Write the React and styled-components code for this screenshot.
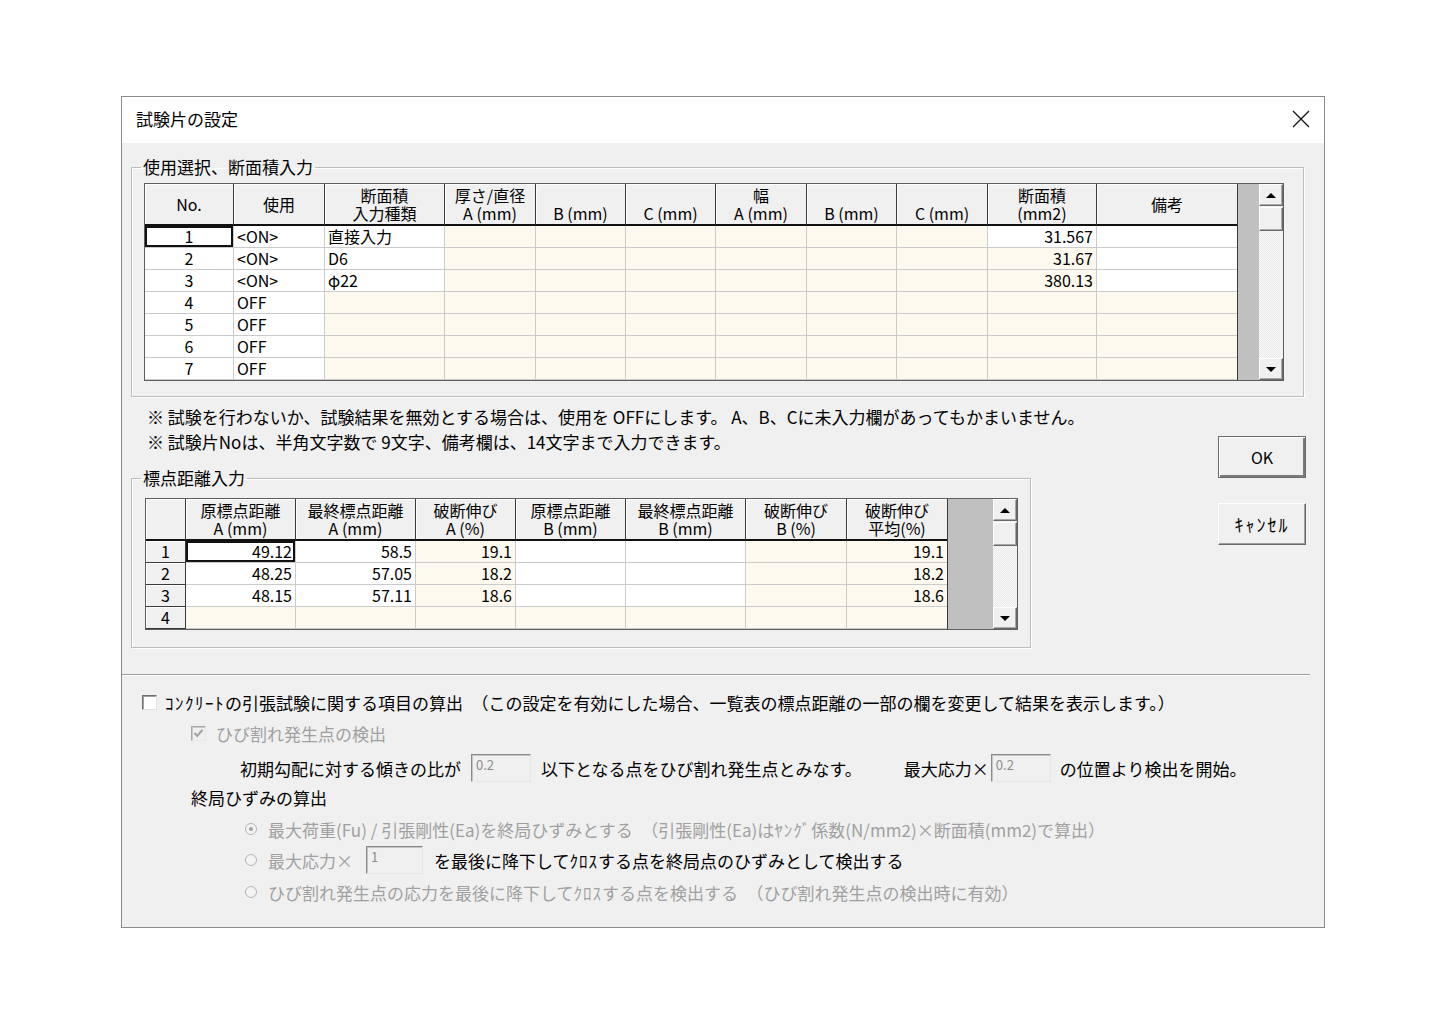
import React from 'react';
import styled, { createGlobalStyle } from 'styled-components';

const GlobalStyle = createGlobalStyle`
  body {
    margin: 0;
    background: #fff;
    font-family: "Noto Sans CJK JP", "Noto Sans", sans-serif;
    color: #000;
  }
`;

const Page = styled.div`
  padding: 96px 0 0 121px;
`;

const Dialog = styled.div`
  width: 1204px;
  height: 832px;
  box-sizing: border-box;
  border: 1px solid #8a8a8a;
  background: #f0f0f0;
  display: flex;
  flex-direction: column;
`;

const TitleBar = styled.div`
  height: 46px;
  background: #fff;
  display: flex;
  align-items: center;
  justify-content: space-between;
  padding: 0 14px 3px 14px;
  box-sizing: border-box;
  font-size: 17px;
  flex-shrink: 0;
`;

const CloseIcon = () => (
  <svg width="18" height="18" viewBox="0 0 18 18">
    <path d="M1 1 L17 17 M17 1 L1 17" stroke="#111" strokeWidth="1.3" fill="none" />
  </svg>
);

const Body = styled.div`
  padding: 14px 20px 0 9px;
`;

const Group = styled.fieldset`
  margin: 0;
  min-width: 0;
  width: ${(p) => p.$width};
  box-sizing: border-box;
  border: 1px solid #bcbcbc;
  box-shadow: inset 1px 1px #fff, 1px 1px #fff;
  padding: ${(p) => p.$pad};
`;

const Legend = styled.legend`
  font-size: 17px;
  line-height: 20px;
  padding: 0 2px;
  margin-left: ${(p) => p.$ml || '-3px'};
`;

const GridFrame = styled.div`
  display: flex;
  border: 1px solid #5e5e5e;
  width: fit-content;
  background: #fff;
`;

const Sheet = styled.div`
  display: grid;
  grid-template-columns: ${(p) => p.$cols};
  grid-template-rows: 42px;
  grid-auto-rows: 22px;
`;

const HeadCell = styled.div`
  background: #f0f0f0;
  box-shadow: inset 1px 1px #fff;
  border-right: ${(p) => (p.$last ? 'none' : '1px solid #3a3a3a')};
  border-bottom: 2px solid #111;
  display: flex;
  flex-direction: column;
  align-items: center;
  justify-content: center;
  font-size: 16px;
  line-height: 18px;
  white-space: nowrap;
`;

const Cell = styled.div`
  background: ${(p) => (p.$cream ? '#fdf9ee' : '#fff')};
  border-right: ${(p) => (p.$last ? 'none' : '1px solid #cbcbcb')};
  border-bottom: 1px solid #cbcbcb;
  font-size: 16px;
  line-height: 21px;
  padding: 0 3px;
  text-align: ${(p) => p.$align};
  white-space: nowrap;
  box-shadow: ${(p) => (p.$sel ? 'inset 0 0 0 2px #111' : 'none')};
`;

const RowHead = styled.div`
  background: #f0f0f0;
  box-shadow: inset 1px 1px #fff;
  border-right: 1px solid #3a3a3a;
  border-bottom: 1px solid #3a3a3a;
  text-align: center;
  font-size: 16px;
  line-height: 21px;
`;

const GrayFill = styled.div`
  width: ${(p) => p.$w}px;
  background: #c0c0c0;
  border-left: 1px solid #3a3a3a;
`;

const ScrollBar = styled.div`
  width: 24px;
  display: flex;
  flex-direction: column;
  background-color: #f7f7f7;
  background-image: repeating-conic-gradient(#e8e8e8 0 25%, #fafafa 0 50%);
  background-size: 2px 2px;
`;

const ScrollBtn = styled.div`
  height: ${(p) => p.$h || 22}px;
  box-sizing: border-box;
  background: #f0f0f0;
  border: 1px solid;
  border-color: #fff #6a6a6a #6a6a6a #fff;
  box-shadow: inset -1px -1px #a8a8a8;
  display: flex;
  align-items: center;
  justify-content: center;
  margin-bottom: ${(p) => p.$mb || 0}px;
`;

const Spacer = styled.div`
  flex: 1;
`;

const Arrow = styled.span`
  width: 0;
  height: 0;
  border-left: 5px solid transparent;
  border-right: 5px solid transparent;
  ${(p) => (p.$down ? 'border-top: 5px solid #000;' : 'border-bottom: 5px solid #000;')}
`;

const Scroller = () => (
  <ScrollBar>
    <ScrollBtn $mb={1}>
      <Arrow />
    </ScrollBtn>
    <ScrollBtn $h={24} />
    <Spacer />
    <ScrollBtn>
      <Arrow $down />
    </ScrollBtn>
  </ScrollBar>
);

const Notes = styled.div`
  margin-top: 7px;
  padding-left: 16px;
  font-size: 17px;
  line-height: 25px;
`;

const LowerRow = styled.div`
  display: flex;
  justify-content: space-between;
`;

const LeftCol = styled.div`
  display: flex;
  flex-direction: column;
`;

const ButtonCol = styled.div`
  display: flex;
  flex-direction: column;
  gap: 25px;
  padding-top: 39px;
  margin-right: -2px;
`;

const Button = styled.div`
  width: 88px;
  height: 42px;
  box-sizing: border-box;
  background: #f0f0f0;
  border: 1px solid;
  border-color: ${(p) => (p.$default ? '#6a6a6a' : '#fff #6a6a6a #6a6a6a #fff')};
  box-shadow: ${(p) =>
    p.$default ? 'inset 1px 1px #fff, inset -2px -2px #7a7a7a' : 'inset -1px -1px #a0a0a0'};
  display: flex;
  align-items: center;
  justify-content: center;
  font-size: 16px;
`;

const HalfKana = styled.span`
  font-size: ${(p) => p.$size || 17}px;
  letter-spacing: ${(p) => p.$ls || 1}px;
`;

const Separator = styled.div`
  margin: 26px -6px 0 -9px;
  border-top: 1px solid #a0a0a0;
  border-bottom: 1px solid #fff;
`;

const OptRow = styled.div`
  height: 28px;
  margin-top: ${(p) => p.$mt}px;
  padding-left: ${(p) => p.$indent}px;
  display: flex;
  align-items: center;
  font-size: 17px;
  white-space: nowrap;
`;

const Label = styled.span`
  color: ${(p) => (p.$dim ? '#a0a0a0' : '#000')};
  margin-left: ${(p) => p.$ml || 0}px;
`;

const CheckBox = styled.span`
  width: 15px;
  height: 15px;
  box-sizing: border-box;
  border: 1px solid;
  border-color: ${(p) => (p.$dim ? '#a8a8a8 #e8e8e8 #e8e8e8 #a8a8a8' : '#6e6e6e #e3e3e3 #e3e3e3 #6e6e6e')};
  box-shadow: inset 1px 1px ${(p) => (p.$dim ? '#c8c8c8' : '#a0a0a0')};
  background: ${(p) => (p.$dim ? '#f0f0f0' : '#fff')};
  display: inline-flex;
  align-items: center;
  justify-content: center;
  margin-right: ${(p) => p.$mr}px;
  flex-shrink: 0;
`;

const Radio = styled.span`
  width: 12px;
  height: 12px;
  box-sizing: border-box;
  border-radius: 50%;
  border: 1px solid #b4b4b4;
  background: #f4f4f4;
  display: inline-flex;
  align-items: center;
  justify-content: center;
  margin-right: 11px;
  flex-shrink: 0;
  &::after {
    content: '';
    width: 4px;
    height: 4px;
    border-radius: 50%;
    background: ${(p) => (p.$on ? '#a0a0a0' : 'transparent')};
  }
`;

const Field = styled.span`
  width: ${(p) => p.$w}px;
  height: 28px;
  box-sizing: border-box;
  border: 1px solid;
  border-color: #8a8a8a #e6e6e6 #e6e6e6 #8a8a8a;
  box-shadow: inset 1px 1px #c4c4c4;
  background: #f0f0f0;
  color: #8c8c8c;
  font-size: 13px;
  line-height: 1;
  padding: 3px 4px;
  margin: 0 ${(p) => p.$mr}px 0 ${(p) => p.$ml}px;
  flex-shrink: 0;
`;

const g1Cols = [89, 91, 120, 91, 90, 90, 91, 90, 91, 109, 140];
const g1Heads = [
  ['No.'],
  ['使用'],
  ['断面積', '入力種類'],
  ['厚さ/直径', 'A (mm)'],
  ['\u00a0', 'B (mm)'],
  ['\u00a0', 'C (mm)'],
  ['幅', 'A (mm)'],
  ['\u00a0', 'B (mm)'],
  ['\u00a0', 'C (mm)'],
  ['断面積', '(mm2)'],
  ['備考'],
];
const g1Align = ['center', 'left', 'left', 'right', 'right', 'right', 'right', 'right', 'right', 'right', 'left'];
const g1Rows = [
  ['1', '<ON>', '直接入力', '31.567'],
  ['2', '<ON>', 'D6', '31.67'],
  ['3', '<ON>', 'φ22', '380.13'],
  ['4', 'OFF', '', ''],
  ['5', 'OFF', '', ''],
  ['6', 'OFF', '', ''],
  ['7', 'OFF', '', ''],
];
const g1Cream = (r, c) => {
  if (c <= 1) return false;
  if (c >= 3 && c <= 8) return true;
  if (c === 9) return r >= 1;
  return r >= 3;
};

const g2Cols = [40, 110, 120, 100, 110, 120, 101, 100];
const g2Heads = [
  ['原標点距離', 'A (mm)'],
  ['最終標点距離', 'A (mm)'],
  ['破断伸び', 'A (%)'],
  ['原標点距離', 'B (mm)'],
  ['最終標点距離', 'B (mm)'],
  ['破断伸び', 'B (%)'],
  ['破断伸び', '平均(%)'],
];
const g2Rows = [
  ['49.12', '58.5', '19.1', '', '', '', '19.1'],
  ['48.25', '57.05', '18.2', '', '', '', '18.2'],
  ['48.15', '57.11', '18.6', '', '', '', '18.6'],
  ['', '', '', '', '', '', ''],
];
const g2Cream = (r, c) => r === 3 || c === 2 || c === 5 || c === 6;

const Head = ({ lines, last }) => (
  <HeadCell $last={last}>
    {lines.map((l, i) => (
      <span key={i}>{l}</span>
    ))}
  </HeadCell>
);

const MainGrid = () => (
  <GridFrame>
    <Sheet $cols={g1Cols.map((w) => `${w}px`).join(' ')}>
      {g1Heads.map((h, i) => (
        <Head key={i} lines={h} last={i === g1Heads.length - 1} />
      ))}
      {g1Rows.map((row, r) => {
        const cells = [row[0], row[1], row[2], '', '', '', '', '', '', row[3], ''];
        return cells.map((v, c) => (
          <Cell
            key={`${r}-${c}`}
            $align={g1Align[c]}
            $cream={g1Cream(r, c)}
            $last={c === cells.length - 1}
            $sel={r === 0 && c === 0}
          >
            {v}
          </Cell>
        ));
      })}
    </Sheet>
    <GrayFill $w={21} />
    <Scroller />
  </GridFrame>
);

const GaugeGrid = () => (
  <GridFrame>
    <Sheet $cols={g2Cols.map((w) => `${w}px`).join(' ')}>
      <HeadCell />
      {g2Heads.map((h, i) => (
        <Head key={i} lines={h} last={i === g2Heads.length - 1} />
      ))}
      {g2Rows.map((row, r) => [
        <RowHead key={`h${r}`}>{r + 1}</RowHead>,
        ...row.map((v, c) => (
          <Cell
            key={`${r}-${c}`}
            $align="right"
            $cream={g2Cream(r, c)}
            $last={c === row.length - 1}
            $sel={r === 0 && c === 0}
          >
            {v}
          </Cell>
        )),
      ])}
    </Sheet>
    <GrayFill $w={45} />
    <Scroller />
  </GridFrame>
);

const Check = () => (
  <svg width="11" height="11" viewBox="0 0 11 11">
    <path d="M1.5 5 L4.2 8 L9.5 1.8" stroke="#a0a0a0" strokeWidth="2" fill="none" />
  </svg>
);

export default function App() {
  return (
    <>
      <GlobalStyle />
      <Page>
        <Dialog>
          <TitleBar>
            <span>試験片の設定</span>
            <CloseIcon />
          </TitleBar>
          <Body>
            <Group $width="1173px" $pad="6px 19px 15px 12px">
              <Legend>使用選択、断面積入力</Legend>
              <MainGrid />
            </Group>
            <LowerRow>
              <LeftCol>
                <Notes>
                  <div>※ 試験を行わないか、試験結果を無効とする場合は、使用を OFFにします。 A、B、Cに未入力欄があってもかまいません。</div>
                  <div>※ 試験片Noは、半角文字数で 9文字、備考欄は、14文字まで入力できます。</div>
                </Notes>
                <Group $width="900px" $pad="10px 13px 17px 13px" style={{ marginTop: 14 }}>
                  <Legend $ml="-4px">標点距離入力</Legend>
                  <GaugeGrid />
                </Group>
              </LeftCol>
              <ButtonCol>
                <Button $default>OK</Button>
                <Button>
                  <HalfKana $size={18} $ls={2}>ｷｬﾝｾﾙ</HalfKana>
                </Button>
              </ButtonCol>
            </LowerRow>
            <Separator />
            <OptRow $mt={12} $indent={11}>
              <CheckBox $mr={8} />
              <Label>
                <HalfKana $ls={1.5}>ｺﾝｸﾘｰﾄ</HalfKana>の引張試験に関する項目の算出　（この設定を有効にした場合、一覧表の標点距離の一部の欄を変更して結果を表示します。）
              </Label>
            </OptRow>
            <OptRow $mt={3} $indent={60}>
              <CheckBox $mr={10} $dim>
                <Check />
              </CheckBox>
              <Label $dim>ひび割れ発生点の検出</Label>
            </OptRow>
            <OptRow $mt={7} $indent={109}>
              <Label>初期勾配に対する傾きの比が</Label>
              <Field $w={60} $ml={10} $mr={10}>0.2</Field>
              <Label>以下となる点をひび割れ発生点とみなす。</Label>
              <Label $ml={42}>最大応力×</Label>
              <Field $w={60} $ml={2} $mr={9}>0.2</Field>
              <Label>の位置より検出を開始。</Label>
            </OptRow>
            <OptRow $mt={1} $indent={60}>
              <Label>終局ひずみの算出</Label>
            </OptRow>
            <OptRow $mt={4} $indent={114}>
              <Radio $on />
              <Label $dim>
                最大荷重(Fu) / 引張剛性(Ea)を終局ひずみとする　（引張剛性(Ea)は<HalfKana>ﾔﾝｸﾞ</HalfKana>係数(N/mm2)×断面積(mm2)で算出）
              </Label>
            </OptRow>
            <OptRow $mt={3} $indent={114}>
              <Radio />
              <Label $dim>最大応力×</Label>
              <Field $w={57} $ml={13} $mr={11}>1</Field>
              <Label>
                を最後に降下して<HalfKana>ｸﾛｽ</HalfKana>する点を終局点のひずみとして検出する
              </Label>
            </OptRow>
            <OptRow $mt={4} $indent={114}>
              <Radio />
              <Label $dim>
                ひび割れ発生点の応力を最後に降下して<HalfKana>ｸﾛｽ</HalfKana>する点を検出する　（ひび割れ発生点の検出時に有効）
              </Label>
            </OptRow>
          </Body>
        </Dialog>
      </Page>
    </>
  );
}
